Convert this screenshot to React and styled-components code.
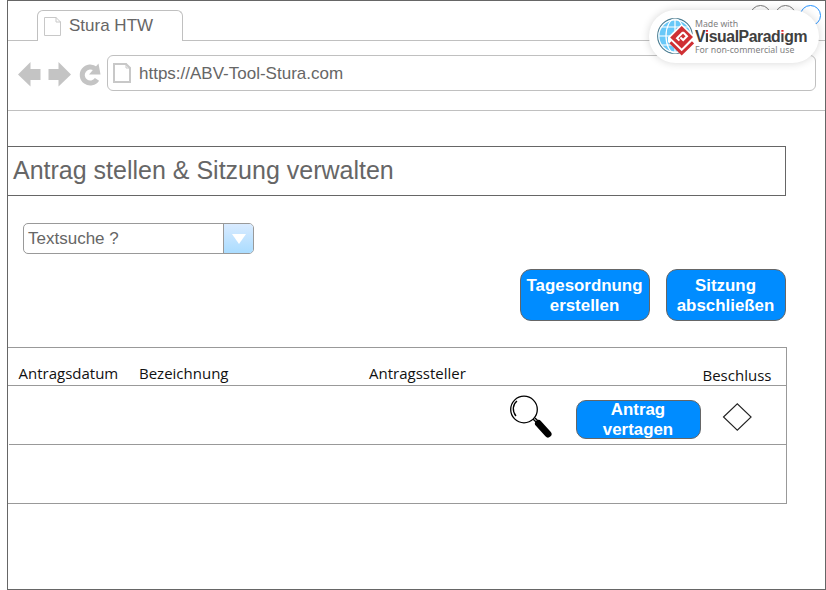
import React from "react";
import styled, { createGlobalStyle } from "styled-components";

const Global = createGlobalStyle`
  * { box-sizing: border-box; }
  body { margin: 0; background: #fff; font-family: "Liberation Sans", Arial, sans-serif; }
  svg { display: block; }
`;

const Window = styled.div`
  position: relative;
  width: 819px;
  height: 590px;
  margin-left: 7px;
  border: 1px solid #666;
  background: #fff;
  overflow: hidden;
`;

const TabStrip = styled.div`
  display: flex;
  align-items: flex-end;
  height: 40px;
  padding-left: 29px;
  box-shadow: inset 0 -1px 0 #c0c0c0;
`;

const Tab = styled.div`
  display: flex;
  gap: 8px;
  width: 146px;
  height: 31px;
  padding: 6px 0 0 6px;
  border: 1px solid #c0c0c0;
  border-bottom: 0;
  border-radius: 6px 6px 0 0;
  background: #fff;
`;

const BrowserText = styled.span`
  font-size: 17px;
  line-height: 20px;
  color: #666;
  white-space: nowrap;
`;

const TabLabel = styled(BrowserText)`
  margin-top: -1px;
`;

const Address = styled(BrowserText)`
  padding-top: 2px;
`;

const WindowControls = styled.div`
  position: absolute;
  top: 4px;
  right: 4px;
  display: flex;
  gap: 4px;
`;

const Control = styled.span`
  width: 21px;
  height: 21px;
  border: 1px solid ${(p) => p.$color};
  border-radius: 50%;
`;

const Toolbar = styled.div`
  display: flex;
  align-items: flex-start;
  height: 70px;
  padding: 14px 9px 0 10px;
  border-bottom: 1px solid #c0c0c0;
`;

const NavIcons = styled.div`
  width: 89px;
  padding-top: 6px;
`;

const AddressBar = styled.div`
  display: flex;
  align-items: center;
  gap: 8px;
  width: 709px;
  height: 36px;
  padding-left: 5px;
  border: 1px solid #c0c0c0;
  border-radius: 6px;
`;

const Title = styled.h1`
  width: 778px;
  height: 50px;
  margin: 35px 0 0;
  padding-left: 5px;
  border: 1px solid #666;
  border-left: 0;
  color: #666;
  font-size: 25px;
  font-weight: 400;
  line-height: 47px;
`;

const Select = styled.div`
  display: flex;
  width: 231px;
  height: 31px;
  margin: 27px 0 0 15px;
  border: 1px solid #999;
  border-radius: 5px;
  overflow: hidden;
`;

const SelectValue = styled.span`
  flex: 1;
  padding-left: 4px;
  color: #666;
  font-size: 17px;
  line-height: 29px;
`;

const SelectArrow = styled.span`
  display: flex;
  align-items: center;
  justify-content: center;
  width: 30px;
  border-left: 1px solid #999;
  background: linear-gradient(#d9ebff, #aadcff);
`;

const Actions = styled.div`
  display: flex;
  gap: 16px;
  justify-content: flex-end;
  width: 778px;
  margin-top: 15px;
`;

const Button = styled.button`
  width: ${(p) => p.$width}px;
  height: ${(p) => p.$height}px;
  padding: ${(p) => p.$drop || 0}px 1px 0 0;
  display: flex;
  align-items: center;
  justify-content: center;
  border: 1px solid #666;
  border-radius: ${(p) => p.$radius || 11}px;
  background: #008cff;
  color: #fff;
  font: bold 16.9px/20px "Liberation Sans", Arial, sans-serif;
  text-align: center;
  white-space: pre;
`;

const Table = styled.div`
  width: 779px;
  height: 157px;
  margin-top: 26px;
  border: 1px solid #999;
  border-left: 0;
`;

const HeaderRow = styled.div`
  display: grid;
  grid-template-columns: 120.5px 230px 333.5px 1fr;
  height: 38px;
  padding-left: 10.5px;
  border-bottom: 1px solid #999;
`;

const HeaderCell = styled.span`
  padding-top: ${(p) => (p.$low ? 17 : 15)}px;
  color: #111;
  font: 15px/20px "Open Sans", sans-serif;
  white-space: nowrap;
`;

const Row = styled.div`
  display: flex;
  align-items: flex-start;
  height: 59px;
  margin-left: 1px;
  padding-left: 500px;
  border-bottom: 1px solid #999;
`;

const SearchSlot = styled.span`
  width: 67px;
  padding-top: 9px;
`;

const ButtonSlot = styled.span`
  width: 146px;
  padding-top: 14px;
`;

const DecisionSlot = styled.span`
  padding-top: 17px;
`;

const Badge = styled.aside`
  position: absolute;
  top: 9px;
  left: 641px;
  display: flex;
  width: 170px;
  height: 53px;
  padding: 7px 0 0 8px;
  border-radius: 27px;
  background: #fff;
  box-shadow: 0 0 9px rgba(0, 0, 0, 0.16);
`;

const BadgeText = styled.div`
  margin-left: 1px;
  padding-top: 1px;
  white-space: nowrap;
`;

const BadgeNote = styled.div`
  color: #808080;
  font: 8.75px/12px "Noto Sans", sans-serif;
`;

const Brand = styled.div`
  color: #404040;
  font: bold 15.8px/14px "Liberation Sans", Arial, sans-serif;
  letter-spacing: -0.45px;
`;

const DottedI = styled.span`
  background: linear-gradient(#e0282c 6.4px, #404040 6.4px);
  background-clip: text;
  color: transparent;
`;

const PageIcon = ({ width, height, stroke }) => (
  <svg width={width} height={height} viewBox={`0 0 ${width} ${height}`} fill="none" stroke="#c8c8c8" strokeWidth={stroke}>
    <path d={`M${stroke / 2} ${stroke / 2}H${width - 5}L${width - stroke / 2} 5V${height - stroke / 2}H${stroke / 2}Z`} />
    <path d={`M${width - 5} 0V5H${width}`} strokeWidth="1" />
  </svg>
);

const NavigationIcon = () => (
  <svg width="84" height="28" viewBox="0 0 84 28" fill="#c4c4c4">
    <path d="M0 13.5 12.5 1V8H22.5V19H12.5V25.5ZM53 13.5 40.5 1V8H30.5V19H40.5V25.5Z" />
    <path d="M79 18.3A8 8 0 1 1 77.5 8" fill="none" stroke="#c4c4c4" strokeWidth="5" />
    <path d="M80.5 2.5 82.5 13.5H71Z" />
  </svg>
);

const Magnifier = () => (
  <svg width="44" height="44" viewBox="0 0 44 44" fill="none" stroke="#000">
    <circle cx="15" cy="14.5" r="13.3" strokeWidth="1.3" />
    <path d="M7 21C3 16 3.5 9.5 8 6" strokeWidth="1.3" />
    <path d="m24 24 4 4M26 23l3 3" strokeWidth="1.4" />
    <path d="m29.5 28.5 9.5 10.5" strokeWidth="7" strokeLinecap="round" />
  </svg>
);

const VisualParadigmLogo = () => (
  <svg width="37" height="39" viewBox="0 0 37 39" fill="none">
    <circle cx="18" cy="19" r="17.3" fill="#68c8f8" stroke="#4d7d91" strokeWidth="1.2" />
    <g stroke="#fff" strokeWidth="1.2">
      <circle cx="18" cy="19" r="16.2" />
      <path d="M18 2V36M5 10H32M2 19H35M5 28H32" />
      <ellipse cx="18" cy="19" rx="9" ry="17" />
    </g>
    <path d="M24.7 7 37 18.5V26L24.7 38 11 25V20Z" fill="#fff" />
    <path d="M24.7 9 36 20 24.7 31.4 13.2 20.4Z" fill="#cf3034" />
    <path d="m13.4 25.3 11.3 11 11.3-11" stroke="#cf3034" strokeWidth="3" />
    <path d="m26 15.2 4 4-3.8 3.8-2.8-2.6" stroke="#fff" strokeWidth="2" />
    <path d="m26 15.2-6 6 2.4 2.4" stroke="#fff" strokeWidth="2" />
  </svg>
);

export default function App() {
  return (
    <>
      <Global />
      <Window>
        <TabStrip>
          <Tab>
            <PageIcon width={17} height={19} stroke={1} />
            <TabLabel>Stura HTW</TabLabel>
          </Tab>
        </TabStrip>
        <WindowControls>
          <Control $color="#777" />
          <Control $color="#777" />
          <Control $color="#2492ff" />
        </WindowControls>
        <Toolbar>
          <NavIcons><NavigationIcon /></NavIcons>
          <AddressBar>
            <PageIcon width={18} height={20} stroke={2} />
            <Address>https://ABV-Tool-Stura.com</Address>
          </AddressBar>
        </Toolbar>
        <Title>Antrag stellen &amp; Sitzung verwalten</Title>
        <Select>
          <SelectValue>Textsuche ?</SelectValue>
          <SelectArrow>
            <svg width="14" height="10" viewBox="0 0 14 10"><path d="M0 0H14L7 10Z" fill="#fff" /></svg>
          </SelectArrow>
        </Select>
        <Actions>
          <Button $width={130} $height={52} $drop={2}>{"Tagesordnung\nerstellen"}</Button>
          <Button $width={120} $height={52} $drop={2}>{"Sitzung\nabschließen"}</Button>
        </Actions>
        <Table>
          <HeaderRow>
            <HeaderCell>Antragsdatum</HeaderCell>
            <HeaderCell>Bezeichnung</HeaderCell>
            <HeaderCell>Antragssteller</HeaderCell>
            <HeaderCell $low>Beschluss</HeaderCell>
          </HeaderRow>
          <Row>
            <SearchSlot><Magnifier /></SearchSlot>
            <ButtonSlot>
              <Button $width={125} $height={39} $radius={10}>{"Antrag\nvertagen"}</Button>
            </ButtonSlot>
            <DecisionSlot>
              <svg width="30" height="30" viewBox="0 0 30 30"><path d="m1.5 14 13.8-13.2 13.8 13.2-13.8 13.2Z" fill="none" stroke="#222" strokeWidth="1.1" /></svg>
            </DecisionSlot>
          </Row>
        </Table>
        <Badge>
          <VisualParadigmLogo />
          <BadgeText>
            <BadgeNote>Made with</BadgeNote>
            <Brand>V<DottedI>i</DottedI>sualParad<DottedI>i</DottedI>gm</Brand>
            <BadgeNote>For non-commercial use</BadgeNote>
          </BadgeText>
        </Badge>
      </Window>
    </>
  );
}
